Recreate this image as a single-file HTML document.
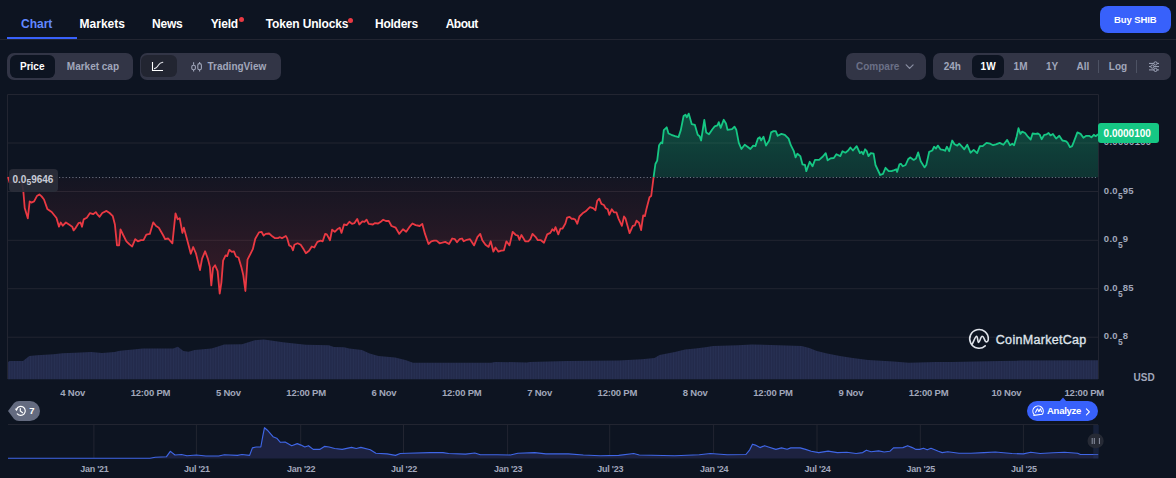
<!DOCTYPE html>
<html><head><meta charset="utf-8"><style>
html,body{margin:0;padding:0;}
body{width:1176px;height:478px;background:#0d1421;position:relative;overflow:hidden;font-family:"Liberation Sans",sans-serif;}
.t{position:absolute;white-space:nowrap;}
</style></head><body>
<svg width="1176" height="478" viewBox="0 0 1176 478" style="position:absolute;left:0;top:0"><defs><linearGradient id="gg" x1="0" y1="110" x2="0" y2="177.2" gradientUnits="userSpaceOnUse"><stop offset="0" stop-color="#16c784" stop-opacity="0.32"/><stop offset="1" stop-color="#16c784" stop-opacity="0.18"/></linearGradient><linearGradient id="rg" x1="0" y1="177.2" x2="0" y2="295" gradientUnits="userSpaceOnUse"><stop offset="0" stop-color="#ea3943" stop-opacity="0.03"/><stop offset="1" stop-color="#ea3943" stop-opacity="0.2"/></linearGradient><pattern id="vp" x="8" y="0" width="2.646" height="10" patternUnits="userSpaceOnUse"><rect width="2.646" height="10" fill="#1e2444"/><rect x="0.5" width="1.7" height="10" fill="#283154"/></pattern><clipPath id="cr"><rect x="8" y="177.2" width="1090" height="200"/></clipPath><clipPath id="cg"><rect x="8" y="90" width="1090" height="87.2"/></clipPath></defs><path d="M7.5,379 V94.5 H1098.5 V379" fill="none" stroke="#222531" stroke-width="1"/><line x1="8" y1="143" x2="1098" y2="143" stroke="#222531" stroke-width="1"/><line x1="8" y1="191.5" x2="1098" y2="191.5" stroke="#222531" stroke-width="1"/><line x1="8" y1="240.3" x2="1098" y2="240.3" stroke="#222531" stroke-width="1"/><line x1="8" y1="288.7" x2="1098" y2="288.7" stroke="#222531" stroke-width="1"/><line x1="8" y1="337.2" x2="1098" y2="337.2" stroke="#222531" stroke-width="1"/><polygon points="8.0,177.2 8.0,177.0 9.6,182.6 14.0,182.0 18.0,179.0 21.6,180.0 23.4,192.0 24.7,208.0 27.8,218.3 29.7,201.4 31.4,202.6 34.1,201.4 36.9,196.1 39.4,194.5 41.6,196.4 44.0,199.5 47.3,208.9 51.7,212.0 56.5,218.0 59.0,226.7 60.7,222.5 62.8,225.7 65.9,222.5 69.0,224.6 72.2,226.7 73.6,230.3 75.7,227.8 78.5,223.2 80.5,222.5 82.0,226.7 83.7,219.4 86.8,217.7 90.0,213.1 93.1,214.2 95.8,212.1 97.1,214.1 99.6,216.8 102.3,213.0 106.5,210.9 109.6,213.0 112.8,216.2 114.9,224.5 117.0,245.4 119.1,245.4 120.5,229.3 123.2,235.0 126.4,241.3 129.5,244.4 132.2,246.5 135.2,239.2 137.9,241.3 141.0,240.2 143.5,240.2 146.3,234.6 149.8,233.9 153.2,222.4 156.1,226.0 158.8,227.7 163.0,235.0 165.1,239.2 168.2,238.5 172.4,243.3 175.5,213.4 177.6,219.3 179.7,218.2 182.4,232.9 183.9,227.7 187.0,239.2 190.8,253.8 193.2,247.0 195.9,253.3 200.0,270.1 202.1,258.6 205.1,251.3 207.8,258.6 209.9,266.9 211.3,285.4 213.0,268.0 215.1,265.3 217.6,271.1 219.7,293.7 221.4,282.6 223.1,260.7 225.6,255.4 227.2,256.1 229.3,249.8 231.8,251.9 233.9,251.3 236.0,256.5 238.5,257.5 241.3,266.9 243.3,275.3 245.4,291.0 247.5,259.6 250.7,253.3 252.8,249.2 255.3,238.7 259.0,232.4 261.5,231.8 263.6,235.6 265.7,233.9 269.1,233.5 272.6,236.6 274.7,238.1 277.9,238.1 280.0,237.2 282.0,238.3 285.8,236.0 287.1,238.1 289.2,245.4 291.3,246.5 293.0,250.3 294.4,244.8 297.6,243.3 300.7,244.8 303.8,249.6 305.9,253.2 309.1,250.7 311.8,246.5 314.3,247.5 317.4,241.9 320.6,240.6 322.7,241.3 325.2,233.9 326.8,234.4 330.0,240.2 332.1,229.7 334.8,231.8 337.3,229.3 339.8,227.7 341.5,232.9 344.0,224.5 346.7,225.1 349.4,221.8 352.0,223.9 354.5,223.1 357.2,218.9 359.3,224.5 362.4,221.4 364.5,221.8 366.6,219.7 368.7,223.9 372.9,224.5 375.0,223.1 378.1,223.5 381.2,221.4 383.2,219.7 385.9,221.0 388.8,221.0 391.5,226.0 395.7,227.7 399.2,233.9 403.0,229.3 406.2,231.8 409.3,227.2 412.4,223.5 415.6,225.1 419.7,226.0 422.3,223.9 425.0,233.9 428.5,244.0 431.3,241.3 434.0,240.6 436.5,240.6 439.6,243.3 442.3,242.7 445.3,241.9 449.0,244.0 452.2,238.5 454.9,239.2 457.0,242.3 459.5,239.2 462.0,238.5 463.7,241.3 466.8,239.8 470.0,239.2 474.1,245.4 477.4,237.1 480.2,233.9 482.3,240.2 485.5,244.8 488.6,246.9 490.7,241.3 493.4,251.7 495.5,247.5 498.4,251.7 501.2,250.7 503.9,250.3 506.4,241.3 509.5,245.4 512.7,231.8 515.8,235.0 517.9,235.6 519.4,239.8 521.4,235.0 525.2,241.3 528.3,241.3 530.4,239.2 532.5,233.9 535.7,237.1 537.8,240.2 540.9,240.2 544.0,242.7 547.2,234.4 550.3,232.9 552.4,229.3 554.1,230.8 555.5,227.2 558.3,234.4 560.4,228.7 562.4,228.7 565.4,223.5 567.1,217.6 569.6,216.8 571.7,218.9 573.1,218.6 575.2,219.6 577.3,223.8 579.4,216.5 582.6,213.3 585.7,211.3 589.9,207.1 593.0,208.1 595.5,210.2 597.2,200.8 599.3,198.7 601.4,203.9 603.9,205.0 605.6,208.1 607.7,209.2 609.3,214.8 611.8,209.2 613.9,212.3 616.4,212.3 618.5,218.6 621.9,225.9 624.0,216.5 625.4,218.2 629.6,233.2 632.8,225.9 634.9,225.3 636.5,220.7 639.0,222.8 641.1,230.1 643.2,215.4 644.9,216.1 646.4,209.2 649.5,197.2 651.2,196.0 653.6,177.2 653.6,177.2" fill="url(#rg)"/><polygon points="653.6,177.2 653.6,177.2 655.4,164.0 657.2,160.6 659.1,145.2 661.0,142.4 662.3,143.3 663.8,130.1 666.7,127.3 668.5,133.5 671.4,134.8 675.1,136.2 678.5,137.1 680.8,130.1 683.6,116.0 685.5,114.7 686.8,117.3 688.7,113.6 691.7,124.1 694.9,124.9 697.7,134.8 699.6,136.2 701.1,140.5 704.3,119.8 706.2,132.4 709.0,134.3 712.4,129.2 714.7,126.4 717.5,125.4 718.8,122.2 720.7,127.9 723.7,119.8 726.0,123.5 727.5,129.8 732.0,129.2 734.5,126.7 736.3,129.8 738.8,142.9 741.4,149.0 744.7,144.8 747.5,146.7 750.4,149.0 753.2,145.6 755.4,146.1 757.9,138.6 759.8,137.3 761.1,140.5 763.5,136.7 766.0,145.6 769.2,140.5 771.1,132.4 773.5,131.1 775.8,131.1 777.7,135.8 781.4,133.9 784.8,134.8 788.6,138.6 790.8,145.2 793.7,150.8 795.6,157.4 797.4,153.7 800.3,156.1 802.5,164.4 805.0,165.0 806.3,171.2 809.7,161.8 812.5,166.3 815.0,159.9 819.1,159.9 822.9,156.5 825.7,153.1 827.6,160.3 830.4,158.4 833.8,158.0 836.4,154.2 840.3,156.1 842.5,151.2 845.4,152.7 848.2,150.5 850.4,147.5 852.9,150.5 856.7,146.1 859.9,153.1 861.7,151.8 863.2,154.2 865.1,149.3 866.6,150.8 868.5,156.1 870.8,153.1 873.6,153.7 875.5,165.0 880.2,175.0 883.0,173.8 885.5,167.8 888.7,171.2 891.5,171.2 894.3,170.1 896.2,169.3 897.1,171.9 899.4,164.4 900.9,163.7 902.8,166.3 905.6,165.0 908.1,159.3 910.3,157.4 913.7,159.9 916.0,158.4 918.2,152.4 920.7,161.2 924.5,167.4 926.3,165.0 929.2,151.8 932.3,150.5 934.1,146.7 936.0,148.6 937.9,145.6 940.4,149.3 943.2,149.9 945.1,150.8 946.9,146.7 949.2,151.2 952.2,140.5 954.5,144.3 957.3,145.6 959.2,143.7 962.0,146.7 964.3,149.3 967.3,144.8 970.5,152.7 973.7,149.9 977.1,153.1 979.9,146.1 982.7,146.1 986.5,142.9 990.3,143.7 993.1,145.2 995.9,144.3 999.7,142.9 1003.4,144.8 1007.2,139.9 1010.0,145.2 1012.3,143.7 1014.1,145.2 1016.6,136.7 1018.5,128.2 1020.4,133.9 1022.2,131.6 1025.1,133.0 1027.9,136.7 1030.7,139.5 1032.6,133.5 1035.4,133.9 1037.9,133.5 1039.8,134.8 1041.6,139.2 1044.3,134.8 1046.7,134.3 1048.6,133.0 1050.5,135.4 1052.9,133.9 1056.1,138.6 1059.3,135.8 1062.4,140.5 1065.6,141.1 1067.4,142.4 1069.9,147.1 1072.1,146.1 1074.0,141.4 1077.4,132.4 1080.6,133.9 1083.4,137.7 1086.3,135.8 1089.1,135.8 1091.4,137.3 1093.8,134.8 1095.7,136.2 1098.1,134.3 1098.1,177.2" fill="url(#gg)"/><line x1="9.3" y1="177.5" x2="1098" y2="177.5" stroke="#a1a7bb" stroke-opacity="0.65" stroke-width="1" stroke-dasharray="1.1,2.22"/><polyline points="8.0,177.0 9.6,182.6 14.0,182.0 18.0,179.0 21.6,180.0 23.4,192.0 24.7,208.0 27.8,218.3 29.7,201.4 31.4,202.6 34.1,201.4 36.9,196.1 39.4,194.5 41.6,196.4 44.0,199.5 47.3,208.9 51.7,212.0 56.5,218.0 59.0,226.7 60.7,222.5 62.8,225.7 65.9,222.5 69.0,224.6 72.2,226.7 73.6,230.3 75.7,227.8 78.5,223.2 80.5,222.5 82.0,226.7 83.7,219.4 86.8,217.7 90.0,213.1 93.1,214.2 95.8,212.1 97.1,214.1 99.6,216.8 102.3,213.0 106.5,210.9 109.6,213.0 112.8,216.2 114.9,224.5 117.0,245.4 119.1,245.4 120.5,229.3 123.2,235.0 126.4,241.3 129.5,244.4 132.2,246.5 135.2,239.2 137.9,241.3 141.0,240.2 143.5,240.2 146.3,234.6 149.8,233.9 153.2,222.4 156.1,226.0 158.8,227.7 163.0,235.0 165.1,239.2 168.2,238.5 172.4,243.3 175.5,213.4 177.6,219.3 179.7,218.2 182.4,232.9 183.9,227.7 187.0,239.2 190.8,253.8 193.2,247.0 195.9,253.3 200.0,270.1 202.1,258.6 205.1,251.3 207.8,258.6 209.9,266.9 211.3,285.4 213.0,268.0 215.1,265.3 217.6,271.1 219.7,293.7 221.4,282.6 223.1,260.7 225.6,255.4 227.2,256.1 229.3,249.8 231.8,251.9 233.9,251.3 236.0,256.5 238.5,257.5 241.3,266.9 243.3,275.3 245.4,291.0 247.5,259.6 250.7,253.3 252.8,249.2 255.3,238.7 259.0,232.4 261.5,231.8 263.6,235.6 265.7,233.9 269.1,233.5 272.6,236.6 274.7,238.1 277.9,238.1 280.0,237.2 282.0,238.3 285.8,236.0 287.1,238.1 289.2,245.4 291.3,246.5 293.0,250.3 294.4,244.8 297.6,243.3 300.7,244.8 303.8,249.6 305.9,253.2 309.1,250.7 311.8,246.5 314.3,247.5 317.4,241.9 320.6,240.6 322.7,241.3 325.2,233.9 326.8,234.4 330.0,240.2 332.1,229.7 334.8,231.8 337.3,229.3 339.8,227.7 341.5,232.9 344.0,224.5 346.7,225.1 349.4,221.8 352.0,223.9 354.5,223.1 357.2,218.9 359.3,224.5 362.4,221.4 364.5,221.8 366.6,219.7 368.7,223.9 372.9,224.5 375.0,223.1 378.1,223.5 381.2,221.4 383.2,219.7 385.9,221.0 388.8,221.0 391.5,226.0 395.7,227.7 399.2,233.9 403.0,229.3 406.2,231.8 409.3,227.2 412.4,223.5 415.6,225.1 419.7,226.0 422.3,223.9 425.0,233.9 428.5,244.0 431.3,241.3 434.0,240.6 436.5,240.6 439.6,243.3 442.3,242.7 445.3,241.9 449.0,244.0 452.2,238.5 454.9,239.2 457.0,242.3 459.5,239.2 462.0,238.5 463.7,241.3 466.8,239.8 470.0,239.2 474.1,245.4 477.4,237.1 480.2,233.9 482.3,240.2 485.5,244.8 488.6,246.9 490.7,241.3 493.4,251.7 495.5,247.5 498.4,251.7 501.2,250.7 503.9,250.3 506.4,241.3 509.5,245.4 512.7,231.8 515.8,235.0 517.9,235.6 519.4,239.8 521.4,235.0 525.2,241.3 528.3,241.3 530.4,239.2 532.5,233.9 535.7,237.1 537.8,240.2 540.9,240.2 544.0,242.7 547.2,234.4 550.3,232.9 552.4,229.3 554.1,230.8 555.5,227.2 558.3,234.4 560.4,228.7 562.4,228.7 565.4,223.5 567.1,217.6 569.6,216.8 571.7,218.9 573.1,218.6 575.2,219.6 577.3,223.8 579.4,216.5 582.6,213.3 585.7,211.3 589.9,207.1 593.0,208.1 595.5,210.2 597.2,200.8 599.3,198.7 601.4,203.9 603.9,205.0 605.6,208.1 607.7,209.2 609.3,214.8 611.8,209.2 613.9,212.3 616.4,212.3 618.5,218.6 621.9,225.9 624.0,216.5 625.4,218.2 629.6,233.2 632.8,225.9 634.9,225.3 636.5,220.7 639.0,222.8 641.1,230.1 643.2,215.4 644.9,216.1 646.4,209.2 649.5,197.2 651.2,196.0 653.6,177.2" fill="none" stroke="#ea3943" stroke-width="1.8" stroke-linejoin="round"/><polyline points="653.6,177.2 655.4,164.0 657.2,160.6 659.1,145.2 661.0,142.4 662.3,143.3 663.8,130.1 666.7,127.3 668.5,133.5 671.4,134.8 675.1,136.2 678.5,137.1 680.8,130.1 683.6,116.0 685.5,114.7 686.8,117.3 688.7,113.6 691.7,124.1 694.9,124.9 697.7,134.8 699.6,136.2 701.1,140.5 704.3,119.8 706.2,132.4 709.0,134.3 712.4,129.2 714.7,126.4 717.5,125.4 718.8,122.2 720.7,127.9 723.7,119.8 726.0,123.5 727.5,129.8 732.0,129.2 734.5,126.7 736.3,129.8 738.8,142.9 741.4,149.0 744.7,144.8 747.5,146.7 750.4,149.0 753.2,145.6 755.4,146.1 757.9,138.6 759.8,137.3 761.1,140.5 763.5,136.7 766.0,145.6 769.2,140.5 771.1,132.4 773.5,131.1 775.8,131.1 777.7,135.8 781.4,133.9 784.8,134.8 788.6,138.6 790.8,145.2 793.7,150.8 795.6,157.4 797.4,153.7 800.3,156.1 802.5,164.4 805.0,165.0 806.3,171.2 809.7,161.8 812.5,166.3 815.0,159.9 819.1,159.9 822.9,156.5 825.7,153.1 827.6,160.3 830.4,158.4 833.8,158.0 836.4,154.2 840.3,156.1 842.5,151.2 845.4,152.7 848.2,150.5 850.4,147.5 852.9,150.5 856.7,146.1 859.9,153.1 861.7,151.8 863.2,154.2 865.1,149.3 866.6,150.8 868.5,156.1 870.8,153.1 873.6,153.7 875.5,165.0 880.2,175.0 883.0,173.8 885.5,167.8 888.7,171.2 891.5,171.2 894.3,170.1 896.2,169.3 897.1,171.9 899.4,164.4 900.9,163.7 902.8,166.3 905.6,165.0 908.1,159.3 910.3,157.4 913.7,159.9 916.0,158.4 918.2,152.4 920.7,161.2 924.5,167.4 926.3,165.0 929.2,151.8 932.3,150.5 934.1,146.7 936.0,148.6 937.9,145.6 940.4,149.3 943.2,149.9 945.1,150.8 946.9,146.7 949.2,151.2 952.2,140.5 954.5,144.3 957.3,145.6 959.2,143.7 962.0,146.7 964.3,149.3 967.3,144.8 970.5,152.7 973.7,149.9 977.1,153.1 979.9,146.1 982.7,146.1 986.5,142.9 990.3,143.7 993.1,145.2 995.9,144.3 999.7,142.9 1003.4,144.8 1007.2,139.9 1010.0,145.2 1012.3,143.7 1014.1,145.2 1016.6,136.7 1018.5,128.2 1020.4,133.9 1022.2,131.6 1025.1,133.0 1027.9,136.7 1030.7,139.5 1032.6,133.5 1035.4,133.9 1037.9,133.5 1039.8,134.8 1041.6,139.2 1044.3,134.8 1046.7,134.3 1048.6,133.0 1050.5,135.4 1052.9,133.9 1056.1,138.6 1059.3,135.8 1062.4,140.5 1065.6,141.1 1067.4,142.4 1069.9,147.1 1072.1,146.1 1074.0,141.4 1077.4,132.4 1080.6,133.9 1083.4,137.7 1086.3,135.8 1089.1,135.8 1091.4,137.3 1093.8,134.8 1095.7,136.2 1098.1,134.3" fill="none" stroke="#16c784" stroke-width="1.8" stroke-linejoin="round"/><polygon points="8.0,379.2 8.0,361.9 9.6,360.9 23.0,360.9 29.3,356.1 37.0,355.3 53.6,354.2 62.5,353.3 75.3,352.7 91.2,351.9 102.0,353.0 114.8,351.9 118.6,351.0 125.0,350.2 133.3,349.4 142.9,348.6 173.2,348.4 177.8,346.8 183.4,350.9 188.5,351.7 194.8,349.9 211.4,348.6 216.5,347.1 224.2,344.5 242.0,344.3 254.8,340.2 263.7,339.4 272.7,340.7 282.9,342.2 305.8,344.8 328.8,345.3 333.9,347.1 344.1,347.3 349.2,348.6 361.9,349.9 369.6,353.5 378.5,356.0 395.1,357.6 405.3,360.1 413.0,362.7 491.2,362.7 495.0,361.9 526.9,362.4 529.5,361.9 567.8,361.1 618.8,360.6 641.7,359.3 654.5,358.1 659.6,355.0 667.2,353.5 674.9,351.9 685.1,349.6 695.3,348.6 705.5,347.3 713.2,346.1 737.9,345.3 751.9,344.5 778.7,345.3 801.6,346.1 809.3,347.9 816.9,350.9 827.1,353.5 839.9,356.0 852.7,358.1 868.0,360.1 893.5,361.6 908.8,362.7 936.8,362.1 952.1,361.9 1000.6,361.1 1020.0,360.6 1098.0,360.2 1098.0,379.2" fill="url(#vp)"/><line x1="8" y1="424.5" x2="1098" y2="424.5" stroke="#222531" stroke-width="1"/><line x1="93.9" y1="425" x2="93.9" y2="458" stroke="#222531" stroke-width="1"/><line x1="196.4" y1="425" x2="196.4" y2="458" stroke="#222531" stroke-width="1"/><line x1="300.7" y1="425" x2="300.7" y2="458" stroke="#222531" stroke-width="1"/><line x1="403.5" y1="425" x2="403.5" y2="458" stroke="#222531" stroke-width="1"/><line x1="507.6" y1="425" x2="507.6" y2="458" stroke="#222531" stroke-width="1"/><line x1="609.7" y1="425" x2="609.7" y2="458" stroke="#222531" stroke-width="1"/><line x1="713.6" y1="425" x2="713.6" y2="458" stroke="#222531" stroke-width="1"/><line x1="817" y1="425" x2="817" y2="458" stroke="#222531" stroke-width="1"/><line x1="920.3" y1="425" x2="920.3" y2="458" stroke="#222531" stroke-width="1"/><line x1="1023.4" y1="425" x2="1023.4" y2="458" stroke="#222531" stroke-width="1"/><polygon points="8.0,458.2 150.0,458.2 155.3,457.3 166.5,456.7 170.3,451.3 172.0,452.6 175.0,455.0 181.5,454.5 187.0,455.8 196.4,455.0 205.8,456.0 218.7,456.0 224.3,454.7 237.4,455.4 242.0,454.5 249.6,455.4 252.4,447.9 256.1,447.0 260.8,447.0 262.7,436.7 264.5,427.7 267.4,430.2 273.0,436.7 276.7,438.2 280.4,442.3 285.1,442.0 291.7,445.7 297.3,443.6 301.0,445.1 304.8,447.0 308.5,445.7 313.2,449.4 319.7,449.4 324.4,446.4 329.1,447.0 334.7,448.5 342.2,449.4 351.5,447.4 356.2,448.5 360.9,447.4 370.3,449.8 375.9,453.2 387.1,453.9 395.5,455.4 400.2,453.5 407.5,453.2 430.0,452.6 443.0,452.6 448.6,453.5 465.5,454.1 474.8,453.0 480.4,454.7 497.3,454.7 510.4,455.0 517.9,453.2 534.7,452.6 545.9,453.9 568.4,453.9 583.3,455.0 600.2,455.8 618.7,455.4 633.7,453.5 639.3,455.0 674.8,455.8 699.2,454.7 710.4,453.5 727.2,454.7 745.9,454.5 749.7,449.8 752.5,444.2 755.3,445.1 760.0,447.6 764.6,445.7 768.4,447.0 775.9,449.4 781.5,447.9 787.1,449.2 790.8,447.9 800.2,447.9 805.6,449.4 811.2,451.3 818.7,452.6 828.1,451.1 837.4,452.6 846.8,452.2 856.1,453.5 862.7,452.6 866.4,450.2 871.1,451.7 878.6,450.9 884.2,452.0 889.8,451.3 893.5,447.9 902.9,447.6 907.6,445.7 912.3,447.6 916.0,449.4 919.7,449.4 923.5,448.3 927.2,449.8 931.0,448.3 938.4,451.3 942.2,452.6 947.8,451.7 959.0,453.2 971.0,453.2 984.0,452.6 995.3,452.0 1012.0,453.5 1023.4,453.9 1030.8,452.2 1040.2,453.5 1053.3,452.8 1064.5,452.2 1077.6,453.2 1080.4,454.5 1098.2,454.5 1098.2,458.5 8.0,458.5" fill="#1d2240"/><polyline points="8.0,458.2 150.0,458.2 155.3,457.3 166.5,456.7 170.3,451.3 172.0,452.6 175.0,455.0 181.5,454.5 187.0,455.8 196.4,455.0 205.8,456.0 218.7,456.0 224.3,454.7 237.4,455.4 242.0,454.5 249.6,455.4 252.4,447.9 256.1,447.0 260.8,447.0 262.7,436.7 264.5,427.7 267.4,430.2 273.0,436.7 276.7,438.2 280.4,442.3 285.1,442.0 291.7,445.7 297.3,443.6 301.0,445.1 304.8,447.0 308.5,445.7 313.2,449.4 319.7,449.4 324.4,446.4 329.1,447.0 334.7,448.5 342.2,449.4 351.5,447.4 356.2,448.5 360.9,447.4 370.3,449.8 375.9,453.2 387.1,453.9 395.5,455.4 400.2,453.5 407.5,453.2 430.0,452.6 443.0,452.6 448.6,453.5 465.5,454.1 474.8,453.0 480.4,454.7 497.3,454.7 510.4,455.0 517.9,453.2 534.7,452.6 545.9,453.9 568.4,453.9 583.3,455.0 600.2,455.8 618.7,455.4 633.7,453.5 639.3,455.0 674.8,455.8 699.2,454.7 710.4,453.5 727.2,454.7 745.9,454.5 749.7,449.8 752.5,444.2 755.3,445.1 760.0,447.6 764.6,445.7 768.4,447.0 775.9,449.4 781.5,447.9 787.1,449.2 790.8,447.9 800.2,447.9 805.6,449.4 811.2,451.3 818.7,452.6 828.1,451.1 837.4,452.6 846.8,452.2 856.1,453.5 862.7,452.6 866.4,450.2 871.1,451.7 878.6,450.9 884.2,452.0 889.8,451.3 893.5,447.9 902.9,447.6 907.6,445.7 912.3,447.6 916.0,449.4 919.7,449.4 923.5,448.3 927.2,449.8 931.0,448.3 938.4,451.3 942.2,452.6 947.8,451.7 959.0,453.2 971.0,453.2 984.0,452.6 995.3,452.0 1012.0,453.5 1023.4,453.9 1030.8,452.2 1040.2,453.5 1053.3,452.8 1064.5,452.2 1077.6,453.2 1080.4,454.5 1098.2,454.5" fill="none" stroke="#3f66e6" stroke-width="1.15" stroke-linejoin="round"/><path d="M8,411 L14,403 Q16,401 19,401 L30,401 A10,10 0 0 1 30,421 L19,421 Q16,421 14,419 Z" fill="#646b80"/><path d="M1059.5,401.5 L1063,397.5 L1066.5,401.5 Z" fill="#3861fb"/><rect x="1093.3" y="425" width="5.4" height="33.5" fill="#2a3a6a" fill-opacity="0.35"/><rect x="1087.5" y="433.6" width="16.2" height="14.6" rx="7.3" fill="#262a35"/><path d="M1092.2,438 V444 M1094.3,438 V444 M1099.4,438 V444" stroke="#8c91a3" stroke-width="1"/></svg>
<div class="t" style="left:21px;top:17.94px;font-size:12px;line-height:12px;color:#6188ff;font-weight:700;letter-spacing:0px;">Chart</div><div class="t" style="left:79.6px;top:17.94px;font-size:12px;line-height:12px;color:#fff;font-weight:700;letter-spacing:0px;">Markets</div><div class="t" style="left:152px;top:17.94px;font-size:12px;line-height:12px;color:#fff;font-weight:700;letter-spacing:-0.2px;">News</div><div class="t" style="left:210.7px;top:17.94px;font-size:12px;line-height:12px;color:#fff;font-weight:700;letter-spacing:-0.2px;">Yield</div><div class="t" style="left:265.8px;top:17.94px;font-size:12px;line-height:12px;color:#fff;font-weight:700;letter-spacing:-0.15px;">Token Unlocks</div><div class="t" style="left:375px;top:17.94px;font-size:12px;line-height:12px;color:#fff;font-weight:700;letter-spacing:-0.25px;">Holders</div><div class="t" style="left:445.7px;top:17.94px;font-size:12px;line-height:12px;color:#fff;font-weight:700;letter-spacing:-0.5px;">About</div><div style="position:absolute;left:0px;top:39px;width:1176px;height:1px;background:#222531;border-radius:0px;"></div><div style="position:absolute;left:7px;top:37px;width:70px;height:2px;background:#3861fb;border-radius:0px;"></div><div style="position:absolute;left:239.1px;top:17.4px;width:5px;height:5px;border-radius:50%;background:#ea3943"></div><div style="position:absolute;left:348.3px;top:17.9px;width:5px;height:5px;border-radius:50%;background:#ea3943"></div><div style="position:absolute;left:1100px;top:6px;width:71px;height:27px;background:#3861fb;border-radius:8px;"></div><div class="t" style="left:1114px;top:15.16px;font-size:9.5px;line-height:9.5px;color:#fff;font-weight:700;letter-spacing:-0.1px;">Buy SHIB</div><div style="position:absolute;left:7px;top:53px;width:126px;height:27px;background:#323546;border-radius:7px;"></div><div style="position:absolute;left:10px;top:55px;width:45px;height:23px;background:#0d1421;border-radius:6px;"></div><div class="t" style="left:20px;top:62.13px;font-size:10px;line-height:10px;color:#fff;font-weight:700;letter-spacing:0px;">Price</div><div class="t" style="left:66.8px;top:62.13px;font-size:10px;line-height:10px;color:#a1a7bb;font-weight:700;letter-spacing:0px;">Market cap</div><div style="position:absolute;left:140px;top:53px;width:141px;height:27px;background:#323546;border-radius:7px;"></div><div style="position:absolute;left:141px;top:55px;width:36px;height:22px;background:#222531;border-radius:6px;"></div><div class="t" style="left:207.5px;top:62.13px;font-size:10px;line-height:10px;color:#a1a7bb;font-weight:700;letter-spacing:0px;">TradingView</div><div style="position:absolute;left:846px;top:53px;width:80px;height:27px;background:#323546;border-radius:7px;"></div><div class="t" style="left:856px;top:62.13px;font-size:10px;line-height:10px;color:#6b7086;font-weight:700;letter-spacing:0px;">Compare</div><div style="position:absolute;left:933px;top:53px;width:238px;height:27px;background:#323546;border-radius:7px;"></div><div style="position:absolute;left:972px;top:55px;width:32px;height:23px;background:#0d1421;border-radius:6px;"></div><div class="t" style="left:943.7px;top:62.13px;font-size:10px;line-height:10px;color:#a1a7bb;font-weight:700;letter-spacing:0px;">24h</div><div class="t" style="left:980.6px;top:62.13px;font-size:10px;line-height:10px;color:#fff;font-weight:700;letter-spacing:0px;">1W</div><div class="t" style="left:1013.6px;top:62.13px;font-size:10px;line-height:10px;color:#a1a7bb;font-weight:700;letter-spacing:0px;">1M</div><div class="t" style="left:1046px;top:62.13px;font-size:10px;line-height:10px;color:#a1a7bb;font-weight:700;letter-spacing:0px;">1Y</div><div class="t" style="left:1076.6px;top:62.13px;font-size:10px;line-height:10px;color:#a1a7bb;font-weight:700;letter-spacing:0px;">All</div><div class="t" style="left:1108.8px;top:62.13px;font-size:10px;line-height:10px;color:#a1a7bb;font-weight:700;letter-spacing:0px;">Log</div><div style="position:absolute;left:1098px;top:60px;width:1px;height:13px;background:#4d5263;border-radius:0px;"></div><div style="position:absolute;left:1136px;top:60px;width:1px;height:13px;background:#4d5263;border-radius:0px;"></div><div class="t" style="left:1103.8px;top:137.06px;font-size:9.5px;line-height:9.5px;color:#a1a7bb;font-weight:700;letter-spacing:0.3px;">0.0000100</div><div class="t" style="left:1103.8px;top:185.56px;font-size:9.5px;line-height:9.5px;color:#a1a7bb;font-weight:700;letter-spacing:0.3px;">0.0<span style="font-size:8.5px;position:relative;top:5.9px;letter-spacing:0">5</span>95</div><div class="t" style="left:1103.8px;top:234.36px;font-size:9.5px;line-height:9.5px;color:#a1a7bb;font-weight:700;letter-spacing:0.3px;">0.0<span style="font-size:8.5px;position:relative;top:5.9px;letter-spacing:0">5</span>9</div><div class="t" style="left:1103.8px;top:282.76px;font-size:9.5px;line-height:9.5px;color:#a1a7bb;font-weight:700;letter-spacing:0.3px;">0.0<span style="font-size:8.5px;position:relative;top:5.9px;letter-spacing:0">5</span>85</div><div class="t" style="left:1103.8px;top:331.26px;font-size:9.5px;line-height:9.5px;color:#a1a7bb;font-weight:700;letter-spacing:0.3px;">0.0<span style="font-size:8.5px;position:relative;top:5.9px;letter-spacing:0">5</span>8</div><div class="t" style="left:1133.6px;top:372.54px;font-size:10px;line-height:10px;color:#a1a7bb;font-weight:700;letter-spacing:0px;">USD</div><div class="t" style="left:-77.3px;width:300px;text-align:center;top:388.06px;font-size:9.5px;line-height:9.5px;color:#a1a7bb;font-weight:700;letter-spacing:-0.2px;">4 Nov</div><div class="t" style="left:0.5px;width:300px;text-align:center;top:388.06px;font-size:9.5px;line-height:9.5px;color:#a1a7bb;font-weight:700;letter-spacing:-0.2px;">12:00 PM</div><div class="t" style="left:78.32999999999998px;width:300px;text-align:center;top:388.06px;font-size:9.5px;line-height:9.5px;color:#a1a7bb;font-weight:700;letter-spacing:-0.2px;">5 Nov</div><div class="t" style="left:156.13px;width:300px;text-align:center;top:388.06px;font-size:9.5px;line-height:9.5px;color:#a1a7bb;font-weight:700;letter-spacing:-0.2px;">12:00 PM</div><div class="t" style="left:233.95999999999998px;width:300px;text-align:center;top:388.06px;font-size:9.5px;line-height:9.5px;color:#a1a7bb;font-weight:700;letter-spacing:-0.2px;">6 Nov</div><div class="t" style="left:311.76px;width:300px;text-align:center;top:388.06px;font-size:9.5px;line-height:9.5px;color:#a1a7bb;font-weight:700;letter-spacing:-0.2px;">12:00 PM</div><div class="t" style="left:389.59000000000003px;width:300px;text-align:center;top:388.06px;font-size:9.5px;line-height:9.5px;color:#a1a7bb;font-weight:700;letter-spacing:-0.2px;">7 Nov</div><div class="t" style="left:467.39px;width:300px;text-align:center;top:388.06px;font-size:9.5px;line-height:9.5px;color:#a1a7bb;font-weight:700;letter-spacing:-0.2px;">12:00 PM</div><div class="t" style="left:545.22px;width:300px;text-align:center;top:388.06px;font-size:9.5px;line-height:9.5px;color:#a1a7bb;font-weight:700;letter-spacing:-0.2px;">8 Nov</div><div class="t" style="left:623.02px;width:300px;text-align:center;top:388.06px;font-size:9.5px;line-height:9.5px;color:#a1a7bb;font-weight:700;letter-spacing:-0.2px;">12:00 PM</div><div class="t" style="left:700.85px;width:300px;text-align:center;top:388.06px;font-size:9.5px;line-height:9.5px;color:#a1a7bb;font-weight:700;letter-spacing:-0.2px;">9 Nov</div><div class="t" style="left:778.65px;width:300px;text-align:center;top:388.06px;font-size:9.5px;line-height:9.5px;color:#a1a7bb;font-weight:700;letter-spacing:-0.2px;">12:00 PM</div><div class="t" style="left:856.48px;width:300px;text-align:center;top:388.06px;font-size:9.5px;line-height:9.5px;color:#a1a7bb;font-weight:700;letter-spacing:-0.2px;">10 Nov</div><div class="t" style="left:934.28px;width:300px;text-align:center;top:388.06px;font-size:9.5px;line-height:9.5px;color:#a1a7bb;font-weight:700;letter-spacing:-0.2px;">12:00 PM</div><div class="t" style="left:-55.599999999999994px;width:300px;text-align:center;top:464.78px;font-size:9px;line-height:9px;color:#a1a7bb;font-weight:700;letter-spacing:-0.25px;">Jan '21</div><div class="t" style="left:46.900000000000006px;width:300px;text-align:center;top:464.78px;font-size:9px;line-height:9px;color:#a1a7bb;font-weight:700;letter-spacing:-0.25px;">Jul '21</div><div class="t" style="left:151.2px;width:300px;text-align:center;top:464.78px;font-size:9px;line-height:9px;color:#a1a7bb;font-weight:700;letter-spacing:-0.25px;">Jan '22</div><div class="t" style="left:254.0px;width:300px;text-align:center;top:464.78px;font-size:9px;line-height:9px;color:#a1a7bb;font-weight:700;letter-spacing:-0.25px;">Jul '22</div><div class="t" style="left:358.1px;width:300px;text-align:center;top:464.78px;font-size:9px;line-height:9px;color:#a1a7bb;font-weight:700;letter-spacing:-0.25px;">Jan '23</div><div class="t" style="left:460.20000000000005px;width:300px;text-align:center;top:464.78px;font-size:9px;line-height:9px;color:#a1a7bb;font-weight:700;letter-spacing:-0.25px;">Jul '23</div><div class="t" style="left:564.1px;width:300px;text-align:center;top:464.78px;font-size:9px;line-height:9px;color:#a1a7bb;font-weight:700;letter-spacing:-0.25px;">Jan '24</div><div class="t" style="left:667.5px;width:300px;text-align:center;top:464.78px;font-size:9px;line-height:9px;color:#a1a7bb;font-weight:700;letter-spacing:-0.25px;">Jul '24</div><div class="t" style="left:770.8px;width:300px;text-align:center;top:464.78px;font-size:9px;line-height:9px;color:#a1a7bb;font-weight:700;letter-spacing:-0.25px;">Jan '25</div><div class="t" style="left:873.9px;width:300px;text-align:center;top:464.78px;font-size:9px;line-height:9px;color:#a1a7bb;font-weight:700;letter-spacing:-0.25px;">Jul '25</div><div style="position:absolute;left:9px;top:169.4px;width:49px;height:22.599999999999994px;background:rgba(42,46,58,0.92);border-radius:4px;"></div><div class="t" style="left:12.5px;top:174.73px;font-size:10px;line-height:10px;color:#c8cbd6;font-weight:700;letter-spacing:0px;">0.0<span style="font-size:8.5px;position:relative;top:2px">5</span>9646</div><div style="position:absolute;left:1098px;top:123px;width:60.5px;height:20.19999999999999px;background:#16c784;border-radius:3px;"></div><div class="t" style="left:1103.6px;top:128.73px;font-size:10px;line-height:10px;color:#fff;font-weight:700;letter-spacing:0px;">0.0000100</div><div class="t" style="left:995.8px;top:334.02px;font-size:12.5px;line-height:12.5px;color:#dfe3ea;font-weight:400;letter-spacing:0.3px;-webkit-text-stroke:0.35px #dfe3ea;">CoinMarketCap</div><div class="t" style="left:29.2px;top:405.96px;font-size:9.5px;line-height:9.5px;color:#fff;font-weight:700;letter-spacing:0px;">7</div><div style="position:absolute;left:1027px;top:401px;width:71px;height:20px;background:#3861fb;border-radius:10px;"></div><div class="t" style="left:1047px;top:406.36px;font-size:9.5px;line-height:9.5px;color:#fff;font-weight:700;letter-spacing:-0.25px;">Analyze</div>
<svg width="1176" height="478" viewBox="0 0 1176 478" style="position:absolute;left:0;top:0"><path d="M152.5,62 V70.5 H163" fill="none" stroke="#fff" stroke-width="1.1"/><path d="M154.5,68.6 C157,68 157.5,66.5 158.5,65 C159.5,63.5 160.5,62.6 162.8,62.2" fill="none" stroke="#e6e8ee" stroke-width="1.1" stroke-linecap="round"/><path d="M193.6,62.2 V64.8 M193.6,70 V71.6 M199.6,62 V63.4 M199.6,69.8 V71.6" stroke="#a1a7bb" stroke-width="1.1"/><rect x="191.8" y="65.2" width="3.6" height="4.6" rx="1.6" fill="none" stroke="#a1a7bb" stroke-width="1.1"/><rect x="197.8" y="63.6" width="3.6" height="6.2" rx="1.6" fill="none" stroke="#a1a7bb" stroke-width="1.1"/><path d="M906.2,64.8 L909.6,68.3 L913.1,64.8" fill="none" stroke="#8a8fa3" stroke-width="1.2" stroke-linecap="round" stroke-linejoin="round"/><path d="M1149,63.4 H1159 M1149,66.6 H1159 M1149,69.9 H1159" stroke="#a1a7bb" stroke-width="1"/><circle cx="1155.5" cy="63.4" r="1.6" fill="#323546" stroke="#a1a7bb" stroke-width="1"/><circle cx="1152.4" cy="66.6" r="1.6" fill="#323546" stroke="#a1a7bb" stroke-width="1"/><circle cx="1155.5" cy="69.9" r="1.6" fill="#323546" stroke="#a1a7bb" stroke-width="1"/><path d="M985.2,345.8 A9.3,9.3 0 1 1 988.3,339.2 C988.3,341.5 986.6,342.6 985.4,341.2 C984.4,340 983.6,336.2 982.2,336.3 C980.6,336.4 979.8,342.4 978.6,342.4 C977.6,342.4 977.8,336.2 976.6,336.2 C975.4,336.2 973.6,341.6 972.2,344" fill="none" stroke="#dfe3ea" stroke-width="1.6" stroke-linecap="round" stroke-linejoin="round"/><path d="M16.6,409.2 A4.5,4.5 0 1 1 17.3,413.8" fill="none" stroke="#fff" stroke-width="1.2" stroke-linecap="round"/><path d="M14.8,408.8 L17.9,408.6 L16.6,411.3 Z" fill="#fff"/><path d="M20.3,408.6 V411.1 L22.6,412.7" fill="none" stroke="#fff" stroke-width="1.2" stroke-linecap="round" stroke-linejoin="round"/><path d="M1034.1,414.5 A5.2,5.2 0 1 1 1042.2,414.3 L1033.8,415.4 Z" fill="none" stroke="#fff" stroke-width="1.1" stroke-linejoin="round"/><path d="M1035.6,412.3 C1036.6,410.6 1037,408.9 1037.6,408.9 C1038.2,408.9 1038.2,411.6 1038.8,411.6 C1039.4,411.6 1039.8,408.9 1040.4,408.9 C1041,408.9 1041,411.8 1041.8,411.6" fill="none" stroke="#fff" stroke-width="1.1" stroke-linecap="round" stroke-linejoin="round"/><path d="M1086.4,408.8 L1089.4,411.8 L1086.4,414.8" fill="none" stroke="#fff" stroke-width="1.1" stroke-linecap="round" stroke-linejoin="round"/></svg>
</body></html>
